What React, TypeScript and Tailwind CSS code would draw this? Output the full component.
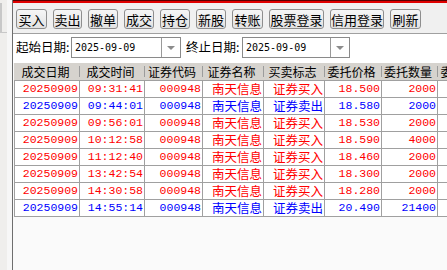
import React from "react";

type Trade = { time: string; price: string; qty: string; sell: boolean };

const trades: Trade[] = [
  { time: "09:31:41", price: "18.500", qty: "2000", sell: false },
  { time: "09:44:01", price: "18.580", qty: "2000", sell: true },
  { time: "09:56:01", price: "18.530", qty: "2000", sell: false },
  { time: "10:12:58", price: "18.590", qty: "4000", sell: false },
  { time: "11:12:40", price: "18.460", qty: "2000", sell: false },
  { time: "13:42:54", price: "18.300", qty: "2000", sell: false },
  { time: "14:30:58", price: "18.280", qty: "2000", sell: false },
  { time: "14:55:14", price: "20.490", qty: "21400", sell: true },
];

const buttons = [
  { label: "买入", w: "w-[31px]" },
  { label: "卖出", w: "w-[29px]" },
  { label: "撤单", w: "w-[30px]" },
  { label: "成交", w: "w-[30px]" },
  { label: "持仓", w: "w-[30px]" },
  { label: "新股", w: "w-[30px]" },
  { label: "转账", w: "w-[31px]" },
  { label: "股票登录", w: "w-[55px]" },
  { label: "信用登录", w: "w-[54px]" },
  { label: "刷新", w: "w-[31px]" },
];

const cols = [
  { title: "成交日期", w: "w-[65px]" },
  { title: "成交时间", w: "w-[65px]" },
  { title: "证券代码", w: "w-[58px]" },
  { title: "证券名称", w: "w-[61px]" },
  { title: "买卖标志", w: "w-[61px]" },
  { title: "委托价格", w: "w-[57px]" },
  { title: "委托数量", w: "w-[56px]" },
  { title: "委托编号", w: "w-[57px]" },
];

const cjk = "font-['Noto_Sans_CJK_SC',sans-serif]";
const mono = "font-['Liberation_Mono','Noto_Sans_CJK_SC',monospace]";

function DateBox({ value, w }: { value: string; w: string }) {
  return (
    <div className={`${w} h-[21px] shrink-0 border border-[#8a8a8a] bg-white flex`}>
      <div className="flex-1 flex items-center pl-[3px] font-['DejaVu_Sans_Mono',monospace] text-[10px] text-black">
        {value}
      </div>
      <div className="w-[19px] border-l border-[#9a9a9a] flex items-center justify-center">
        <div className="w-0 h-0 border-l-[4px] border-r-[4px] border-t-[4px] border-l-transparent border-r-transparent border-t-[#8c8c8c]" />
      </div>
    </div>
  );
}

export default function App() {
  return (
    <div className="w-[447px] h-[270px] overflow-hidden flex bg-[#fafafa]">
      {/* left strip */}
      <div className="w-[12px] shrink-0 flex">
        <div className="w-[7px] bg-[#efeeec] flex flex-col">
          <div className="h-[3px]" />
          <div className="h-[30px] border-l-2 border-b border-[#c8c8c8]" />
        </div>
        <div className="w-[5px] bg-[#f7f7f7]" />
      </div>
      <div className="w-[1px] shrink-0 bg-[#6e6e6e]" />

      <div className="flex-1 min-w-0 flex flex-col">
        <div className="h-[1px] bg-[#5a0000]" />
        <div className="h-[2px] bg-[#e00000]" />

        {/* toolbar */}
        <div className="h-[30px] bg-[#f0f0f0] flex items-start gap-[6px] pt-[6px] pl-[3px]">
          {buttons.map((b) => (
            <div
              key={b.label}
              className={`${b.w} h-[20px] shrink-0 rounded-[3px] border border-[#8e8e8e] bg-gradient-to-b from-[#f6f6f6] to-[#e2e2e2] flex items-center justify-center ${cjk} text-[13px] leading-none text-black`}
            >
              {b.label}
            </div>
          ))}
        </div>
        <div className="h-[1px] bg-[#a0a0a0]" />

        {/* date filter */}
        <div className={`h-[29px] bg-white flex items-start pt-[3px] pl-[3px] ${cjk} text-[12.5px] text-black`}>
          <span className="h-[21px] flex items-center w-[55px]">起始日期:</span>
          <DateBox value="2025-09-09" w="w-[110px]" />
          <span className="h-[21px] flex items-center ml-[5px] w-[56px]">终止日期:</span>
          <DateBox value="2025-09-09" w="w-[108px]" />
        </div>

        {/* grid */}
        <div className="pl-[1px] flex flex-col">
          <div className="h-[17px] bg-[#d6d3ce] flex pl-[1px] whitespace-nowrap">
            {cols.map((c) => (
              <div key={c.title} className={`${c.w} shrink-0 flex items-center`}>
                <span className={`flex-1 text-center pr-[3px] ${cjk} text-[12px] leading-[14px] text-black`}>
                  {c.title}
                </span>
                <div className="w-[1px] h-[11px] bg-[#9c9c9c]" />
              </div>
            ))}
          </div>
          <div className="border-l border-t border-[#a0a0a0]">
            {trades.map((t) => {
              const color = t.sell ? "text-[#0000ff]" : "text-[#ff0000]";
              const cells = [
                { v: "20250909", f: mono },
                { v: t.time, f: mono },
                { v: "000948", f: mono },
                { v: "南天信息", f: cjk },
                { v: t.sell ? "证券卖出" : "证券买入", f: cjk },
                { v: t.price, f: mono },
                { v: t.qty, f: mono },
                { v: "", f: mono },
              ];
              return (
                <div key={t.time} className={`h-[17px] flex border-b border-[#a0a0a0] bg-white whitespace-nowrap ${color}`}>
                  {cells.map((c, i) => (
                    <div
                      key={i}
                      className={`${cols[i].w} shrink-0 border-r border-[#a0a0a0] text-right pr-[1px] leading-[16px] ${c.f} ${
                        c.f === cjk ? "text-[12.5px]" : "text-[11.5px]"
                      }`}
                    >
                      {c.v}
                    </div>
                  ))}
                </div>
              );
            })}
          </div>
        </div>
      </div>
    </div>
  );
}
